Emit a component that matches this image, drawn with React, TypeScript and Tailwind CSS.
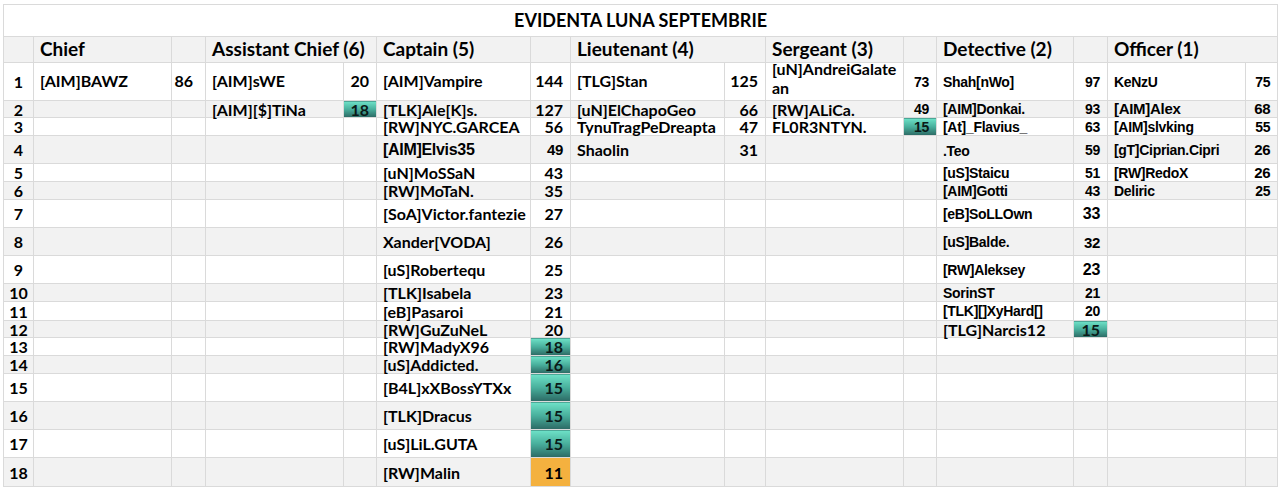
import React from 'react'

type Pair = {
  n?: React.ReactNode
  s?: string
  na?: boolean // name in arial
  sa?: boolean // score in arial
  hl?: 'teal' | 'orange'
  big?: boolean
  ns?: string // name extra classes
  ss?: string // score extra classes
}

type Row = { h: string; cells: (Pair | null)[] }

const ARIAL = "font-['Liberation_Sans',Arial,sans-serif] tracking-[-0.3px]"

// [label, spans the score column too]
const headers: [string, boolean][] = [
  ['Chief', false],
  ['Assistant Chief (6)', true],
  ['Captain (5)', false],
  ['Lieutenant (4)', true],
  ['Sergeant (3)', false],
  ['Detective (2)', false],
  ['Officer (1)', true],
]

const rows: Row[] = [
  {
    h: 'h-[38px]',
    cells: [
      { n: '[AIM]BAWZ', s: '86', ns: 'pb-[3px]', ss: 'pr-[12px] pb-[3px]' },
      { n: '[AIM]sWE', s: '20', ns: 'pb-[3px]', ss: 'pb-[3px]' },
      { n: '[AIM]Vampire', s: '144', ns: 'pb-[3px]', ss: 'pb-[3px]' },
      { n: '[TLG]Stan', s: '125', ns: 'pb-[3px]', ss: 'text-center pr-0 pb-[3px]' },
      {
        n: (
          <span className="-mt-[4px] block leading-[19px]">
            [uN]AndreiGalate
            <br />
            an
          </span>
        ),
        s: '73',
        sa: true,
        ns: 'align-top',
        ss: 'pr-[4px] pt-[1px]',
      },
      { n: 'Shah[nWo]', s: '97', na: true, sa: true, ns: 'pt-[1px]', ss: 'pt-[1px]' },
      { n: 'KeNzU', s: '75', na: true, sa: true, ns: 'pt-[1px]', ss: 'pt-[1px]' },
    ],
  },
  {
    h: 'h-[17px]',
    cells: [
      null,
      { n: '[AIM][$]TiNa', s: '18', hl: 'teal' },
      { n: '[TLK]Ale[K]s.', s: '127' },
      { n: '[uN]ElChapoGeo', s: '66' },
      { n: '[RW]ALiCa.', s: '49', sa: true, ss: 'pr-[4px]' },
      { n: '[AIM]Donkai.', s: '93', na: true, sa: true },
      { n: '[AIM]Alex', s: '68', na: true, sa: true, ns: 'text-[15px]', ss: 'text-[15px]' },
    ],
  },
  {
    h: 'h-[18px]',
    cells: [
      null,
      null,
      { n: '[RW]NYC.GARCEA', s: '56' },
      { n: 'TynuTragPeDreapta', s: '47' },
      { n: 'FL0R3NTYN.', s: '15', sa: true, hl: 'teal', ss: 'pr-[4px]' },
      { n: '[At]_Flavius_', s: '63', na: true, sa: true },
      { n: '[AIM]slvking', s: '55', na: true, sa: true },
    ],
  },
  {
    h: 'h-[28px]',
    cells: [
      null,
      null,
      { n: '[AIM]Elvis35', s: '49', na: true, sa: true, big: true, ss: 'text-[15px]' },
      { n: 'Shaolin', s: '31' },
      null,
      { n: '.Teo', s: '59', na: true, sa: true, ns: 'pt-[2px]' },
      { n: '[gT]Ciprian.Cipri', s: '26', na: true, sa: true, ss: 'text-[15px]' },
    ],
  },
  {
    h: 'h-[18px]',
    cells: [
      null,
      null,
      { n: '[uN]MoSSaN', s: '43' },
      null,
      null,
      { n: '[uS]Staicu', s: '51', na: true, sa: true },
      { n: '[RW]RedoX', s: '26', na: true, sa: true, ss: 'text-[15px]' },
    ],
  },
  {
    h: 'h-[18px]',
    cells: [
      null,
      null,
      { n: '[RW]MoTaN.', s: '35' },
      null,
      null,
      { n: '[AIM]Gotti', s: '43', na: true, sa: true },
      { n: 'Deliric', s: '25', na: true, sa: true },
    ],
  },
  {
    h: 'h-[28px]',
    cells: [
      null,
      null,
      { n: '[SoA]Victor.fantezie', s: '27' },
      null,
      null,
      { n: '[eB]SoLLOwn', s: '33', na: true, sa: true, ss: 'text-[16px]' },
      null,
    ],
  },
  {
    h: 'h-[28px]',
    cells: [
      null,
      null,
      { n: 'Xander[VODA]', s: '26' },
      null,
      null,
      { n: '[uS]Balde.', s: '32', na: true, sa: true, ss: 'text-[15px] pt-[2px]' },
      null,
    ],
  },
  {
    h: 'h-[28px]',
    cells: [
      null,
      null,
      { n: '[uS]Robertequ', s: '25' },
      null,
      null,
      { n: '[RW]Aleksey', s: '23', na: true, sa: true, ss: 'text-[16px]' },
      null,
    ],
  },
  {
    h: 'h-[18px]',
    cells: [
      null,
      null,
      { n: '[TLK]Isabela', s: '23' },
      null,
      null,
      { n: 'SorinST', s: '21', na: true, sa: true },
      null,
    ],
  },
  {
    h: 'h-[19px]',
    cells: [
      null,
      null,
      { n: '[eB]Pasaroi', s: '21' },
      null,
      null,
      { n: '[TLK][]XyHard[]', s: '20', na: true, sa: true },
      null,
    ],
  },
  {
    h: 'h-[17px]',
    cells: [
      null,
      null,
      { n: '[RW]GuZuNeL', s: '20' },
      null,
      null,
      { n: '[TLG]Narcis12', s: '15', hl: 'teal' },
      null,
    ],
  },
  { h: 'h-[18px]', cells: [null, null, { n: '[RW]MadyX96', s: '18', hl: 'teal' }, null, null, null, null] },
  { h: 'h-[18px]', cells: [null, null, { n: '[uS]Addicted.', s: '16', hl: 'teal' }, null, null, null, null] },
  { h: 'h-[28px]', cells: [null, null, { n: '[B4L]xXBossYTXx', s: '15', hl: 'teal' }, null, null, null, null] },
  { h: 'h-[28px]', cells: [null, null, { n: '[TLK]Dracus', s: '15', hl: 'teal' }, null, null, null, null] },
  { h: 'h-[28px]', cells: [null, null, { n: '[uS]LiL.GUTA', s: '15', hl: 'teal' }, null, null, null, null] },
  { h: 'h-[29px]', cells: [null, null, { n: '[RW]Malin', s: '11', hl: 'orange' }, null, null, null, null] },
]

// name / score column widths per rank
const widths: [string, string][] = [
  ['w-[138px]', 'w-[34px]'],
  ['w-[138px]', 'w-[33px]'],
  ['w-[154px]', 'w-[40px]'],
  ['w-[154px]', 'w-[41px]'],
  ['w-[138px]', 'w-[33px]'],
  ['w-[137px]', 'w-[34px]'],
  ['w-[138px]', 'w-[32px]'],
]

const cellBase = 'border border-[#dadada] p-0 align-middle whitespace-nowrap'

function NameCell({ p }: { p: Pair | null }) {
  if (!p) return <td className={cellBase} />
  const font = p.na
    ? `${ARIAL} ${p.big ? 'text-[16px]' : 'text-[14px]'} leading-[14px]`
    : 'text-[16px] leading-[15px]'
  return <td className={`${cellBase} pl-[6px] ${font} ${p.ns ?? ''}`}>{p.n}</td>
}

function ScoreCell({ p }: { p: Pair | null }) {
  if (!p) return <td className={cellBase} />
  const font = p.sa ? `${ARIAL} text-[14px] leading-[14px]` : 'text-[16px] leading-[15px]'
  const bg =
    p.hl === 'teal'
      ? 'bg-linear-to-b from-[#6ee2c8] via-[#48ae9b] to-[#2c6964] text-[#0a1a18]'
      : p.hl === 'orange'
        ? 'bg-[#f4b13f]'
        : ''
  return (
    <td className={`${cellBase} text-right pr-[7px] ${font} ${bg} ${p.ss ?? ''}`}>
      {p.s}
    </td>
  )
}

export default function App() {
  return (
    <div className="min-h-[489px] w-[1280px] bg-white font-['Lato',sans-serif] font-bold text-black">
      <table className="ml-[3px] mt-[4px] w-[1274px] table-fixed border-collapse">
        <colgroup>
          <col className="w-[30px]" />
          {widths.map(([a, b], i) => (
            <React.Fragment key={i}>
              <col className={a} />
              <col className={b} />
            </React.Fragment>
          ))}
        </colgroup>
        <tbody>
          <tr className="h-[32px]">
            <td colSpan={15} className="border border-[#dadada] p-0 pb-[2px] text-center text-[18px] leading-none">
              EVIDENTA LUNA SEPTEMBRIE
            </td>
          </tr>
          <tr className="h-[26px] bg-[#f2f2f2]">
            <td className={cellBase} />
            {headers.map(([h, wide]) => (
              <React.Fragment key={h}>
                <td
                  colSpan={wide ? 2 : 1}
                  className={`${cellBase} pl-[6px] pb-[2px] text-[19px] leading-none`}
                >
                  {h}
                </td>
                {!wide && <td className={cellBase} />}
              </React.Fragment>
            ))}
          </tr>
          {rows.map((r, i) => (
            <tr key={i} className={`${r.h} ${i % 2 === 1 ? 'bg-[#f2f2f2]' : 'bg-white'}`}>
              <td className={`${cellBase} text-center text-[16px] leading-[15px]`}>{i + 1}</td>
              {r.cells.map((p, j) => (
                <React.Fragment key={j}>
                  <NameCell p={p} />
                  <ScoreCell p={p} />
                </React.Fragment>
              ))}
            </tr>
          ))}
        </tbody>
      </table>
    </div>
  )
}
